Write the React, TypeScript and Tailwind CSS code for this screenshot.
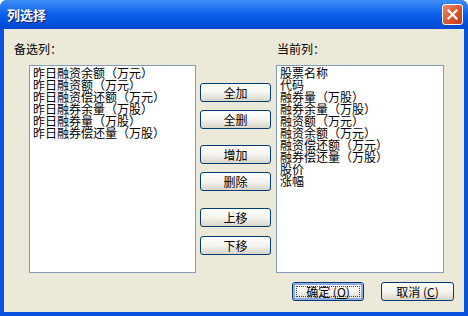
import React from "react";

const font = { fontFamily: '"Noto Sans CJK SC", "Liberation Sans", sans-serif' };

const leftItems = [
  "昨日融资余额（万元）",
  "昨日融资额（万元）",
  "昨日融资偿还额（万元）",
  "昨日融券余量（万股）",
  "昨日融券量（万股）",
  "昨日融券偿还量（万股）",
];

const rightItems = [
  "股票名称",
  "代码",
  "融券量（万股）",
  "融券余量（万股）",
  "融资额（万元）",
  "融资余额（万元）",
  "融资偿还额（万元）",
  "融券偿还量（万股）",
  "股价",
  "涨幅",
];

function XPButton({
  children,
  className = "",
  isDefault = false,
}: {
  children: React.ReactNode;
  className?: string;
  isDefault?: boolean;
}) {
  return (
    <div
      className={`h-[19px] rounded-[3px] border border-[#003C74] bg-gradient-to-b from-[#FFFFFF] via-[#F5F4EF] to-[#D9D5C9] flex items-center justify-center text-[12px] leading-[12px] text-black relative ${
        isDefault ? "shadow-[inset_0_0_0_2px_#8EADE8]" : ""
      } ${className}`}
    >
      {isDefault && (
        <div className="absolute left-[3px] right-[3px] top-[3px] bottom-[3px] border border-dotted border-[#444]" />
      )}
      <span className="relative">{children}</span>
    </div>
  );
}

export default function App() {
  return (
    <div
      className="w-[468px] h-[316px] flex flex-col bg-[#0A52DE] rounded-t-[7px] overflow-hidden"
      style={font}
    >
      <div className="h-[29px] shrink-0 flex items-center justify-between bg-gradient-to-b from-[#3D8EF8] via-[#0A5EEA] to-[#0049D2] pl-[7px] pr-[5px]">
        <span className="text-white font-bold text-[13px] leading-[14px] [text-shadow:1px_1px_0_#0A1E7A]">
          列选择
        </span>
        <div className="w-[21px] h-[21px] rounded-[3px] border border-white bg-gradient-to-br from-[#EE8A6A] via-[#DA5A32] to-[#C03A14] flex items-center justify-center">
          <svg width="11" height="11" viewBox="0 0 11 11">
            <path d="M1.5 1.5 L9.5 9.5 M9.5 1.5 L1.5 9.5" stroke="white" strokeWidth="2.2" strokeLinecap="square" />
          </svg>
        </div>
      </div>
      <div className="flex-1 mx-[4px] mb-[4px] bg-[#ECE9D8] flex flex-col text-[12px] leading-[12px] text-black">
        <div className="flex pt-[14px]">
          <div className="flex flex-col pl-[10px]">
            <span className="leading-[12px]">备选列：</span>
            <div className="ml-[15px] mt-[10px] w-[167px] h-[208px] border border-[#7F9DB9] bg-white pt-[1px] pl-[3px]">
              {leftItems.map((t) => (
                <div key={t} className="leading-[12px] h-[12px] whitespace-nowrap">
                  {t}
                </div>
              ))}
            </div>
          </div>
          <div className="flex flex-col ml-[4px] mt-[40px] w-[71px]">
            <XPButton>全加</XPButton>
            <XPButton className="mt-[8px]">全删</XPButton>
            <XPButton className="mt-[16px]">增加</XPButton>
            <XPButton className="mt-[8px]">删除</XPButton>
            <XPButton className="mt-[17px]">上移</XPButton>
            <XPButton className="mt-[9px]">下移</XPButton>
          </div>
          <div className="flex flex-col ml-[5px]">
            <span className="leading-[12px] ml-[1px]">当前列：</span>
            <div className="mt-[10px] w-[168px] h-[208px] border border-[#7F9DB9] bg-white pt-[1px] pl-[3px]">
              {rightItems.map((t) => (
                <div key={t} className="leading-[12px] h-[12px] whitespace-nowrap">
                  {t}
                </div>
              ))}
            </div>
          </div>
        </div>
        <div className="flex justify-end pr-[10px] mt-[9px]">
          <XPButton isDefault className="w-[72px]">
            确定 (<span className="underline">O</span>)
          </XPButton>
          <XPButton className="w-[73px] ml-[17px]">
            取消 (<span className="underline">C</span>)
          </XPButton>
        </div>
      </div>
    </div>
  );
}
